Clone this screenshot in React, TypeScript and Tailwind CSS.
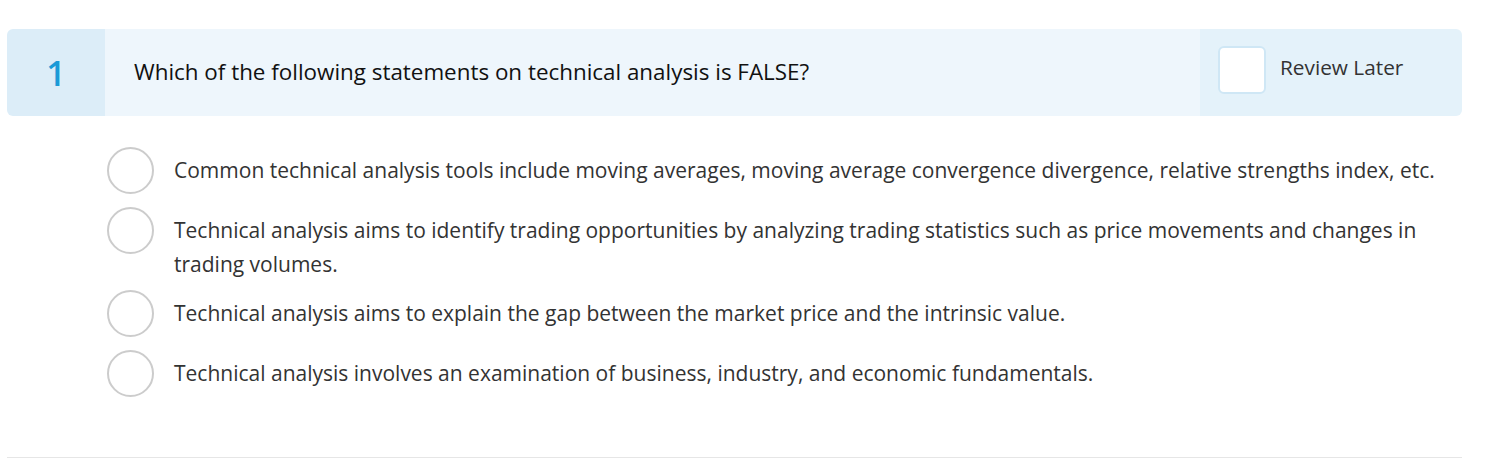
import React, { useState } from "react";

const options = [
  "Common technical analysis tools include moving averages, moving average convergence divergence, relative strengths index, etc.",
  "Technical analysis aims to identify trading opportunities by analyzing trading statistics such as price movements and changes in trading volumes.",
  "Technical analysis aims to explain the gap between the market price and the intrinsic value.",
  "Technical analysis involves an examination of business, industry, and economic fundamentals.",
];

const App = () => {
  const [selected, setSelected] = useState<number | null>(null);
  const [review, setReview] = useState(false);

  return (
    <div
      className="w-[1497px] h-[468px] bg-white pt-[29px] pl-[7px]"
      style={{ fontFamily: '"Open Sans", sans-serif' }}
    >
      <div className="w-[1455px]">
        {/* header */}
        <div className="flex h-[87px] rounded-md overflow-hidden">
          <div className="w-[98px] bg-[#dcedf8] flex items-center justify-center">
            <span className="text-[34px] font-semibold text-[#1b9ad7] leading-none">1</span>
          </div>
          <div className="flex-1 bg-[#eef6fc] flex items-center pl-[29px]">
            <h2 className="text-[22.4px] text-[#111] leading-none">
              Which of the following statements on technical analysis is FALSE?
            </h2>
          </div>
          <div className="w-[262px] bg-[#e4f2fa] flex items-start pt-[17px] pl-[18px] gap-[14px]">
            <button
              onClick={() => setReview(!review)}
              className="w-[48px] h-[48px] bg-white border-2 border-[#cfe7f5] rounded-md"
            />
            <span className="text-[20.8px] text-[#333] mt-[7px] leading-[28px]">Review Later</span>
          </div>
        </div>

        {/* options */}
        <div className="flex flex-col gap-[9px] pl-[100px] pt-[31px] h-[341px]">
          {options.map((opt, i) => (
            <div
              key={i}
              className="flex min-h-[51px] cursor-pointer"
              onClick={() => setSelected(i)}
            >
              <div
                className={
                  "w-[47px] h-[47px] rounded-full border-2 shrink-0 " +
                  (selected === i ? "border-[#1b9ad7]" : "border-[#cccccc]")
                }
              />
              <p className="pl-[20px] pt-[6px] pr-[10px] text-[21px] leading-[34px] text-[#333]">
                {opt}
              </p>
            </div>
          ))}
        </div>
        <div className="border-t border-[#e6e6e6]" />
      </div>
    </div>
  );
};

export default App;
